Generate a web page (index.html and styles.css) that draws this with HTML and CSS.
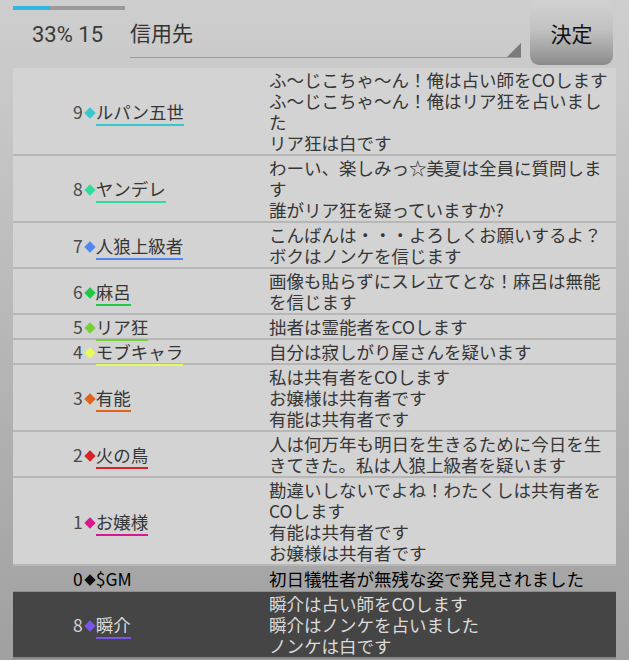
FILE: index.html
```html
<!DOCTYPE html>
<html lang="ja">
<head>
    <meta charset="UTF-8">
    <meta name="viewport" content="width=device-width, initial-scale=1.0">
    <title>投票</title>
    <link rel="stylesheet" href="styles.css">
</head>
<body>
    <header class="top">
        <div class="status">
            <div class="progress"><div class="progress-fill" style="width: 33%"></div></div>
            <div class="count">33% 15</div>
        </div>
        <div class="spinner">信用先</div>
        <button class="decide">決定</button>
    </header>

    <table class="log">
        <tbody>
            <tr>
                <td class="who"><span class="num">9</span><span class="dia c9"></span><span class="name c9">ルパン五世</span></td>
                <td class="msg">ふ〜じこちゃ〜ん！俺は占い師をCOします<br>ふ〜じこちゃ〜ん！俺はリア狂を占いました<br>リア狂は白です</td>
            </tr>
            <tr>
                <td class="who"><span class="num">8</span><span class="dia c8"></span><span class="name c8">ヤンデレ</span></td>
                <td class="msg">わーい、楽しみっ☆美夏は全員に質問します<br>誰がリア狂を疑っていますか?</td>
            </tr>
            <tr>
                <td class="who"><span class="num">7</span><span class="dia c7"></span><span class="name c7">人狼上級者</span></td>
                <td class="msg">こんばんは・・・よろしくお願いするよ？<br>ボクはノンケを信じます</td>
            </tr>
            <tr>
                <td class="who"><span class="num">6</span><span class="dia c6"></span><span class="name c6">麻呂</span></td>
                <td class="msg">画像も貼らずにスレ立てとな！麻呂は無能を信じます</td>
            </tr>
            <tr>
                <td class="who"><span class="num">5</span><span class="dia c5"></span><span class="name c5">リア狂</span></td>
                <td class="msg">拙者は霊能者をCOします</td>
            </tr>
            <tr>
                <td class="who"><span class="num">4</span><span class="dia c4"></span><span class="name c4">モブキャラ</span></td>
                <td class="msg">自分は寂しがり屋さんを疑います</td>
            </tr>
            <tr>
                <td class="who"><span class="num">3</span><span class="dia c3"></span><span class="name c3">有能</span></td>
                <td class="msg">私は共有者をCOします<br>お嬢様は共有者です<br>有能は共有者です</td>
            </tr>
            <tr>
                <td class="who"><span class="num">2</span><span class="dia c2"></span><span class="name c2">火の鳥</span></td>
                <td class="msg">人は何万年も明日を生きるために今日を生きてきた。私は人狼上級者を疑います</td>
            </tr>
            <tr>
                <td class="who"><span class="num">1</span><span class="dia c1"></span><span class="name c1">お嬢様</span></td>
                <td class="msg">勘違いしないでよね！わたくしは共有者をCOします<br>有能は共有者です<br>お嬢様は共有者です</td>
            </tr>
            <tr class="gm">
                <td class="who"><span class="num">0</span><span class="dia c0"></span>$GM</td>
                <td class="msg">初日犠牲者が無残な姿で発見されました</td>
            </tr>
            <tr class="dead">
                <td class="who"><span class="num">8</span><span class="dia cp"></span><span class="name cp">瞬介</span></td>
                <td class="msg">瞬介は占い師をCOします<br>瞬介はノンケを占いました<br>ノンケは白です</td>
            </tr>
        </tbody>
    </table>
</body>
</html>
```

FILE: styles.css
```css
html, body {
    height: 100%;
}

body {
    margin: 0;
    font-family: "Noto Sans CJK JP", "Noto Sans", sans-serif;
    color: #363636;
    background: linear-gradient(#cecece 0, #c9c9c9 80px, #a0a0a0 660px);
    overflow: hidden;
}

.top {
    display: flex;
    height: 68px;
    padding-left: 13px;
    box-sizing: border-box;
}

.status {
    width: 112px;
    margin-right: 5px;
}

.progress {
    height: 4px;
    margin-top: 6px;
    background-color: #9a9a9a;
}

.progress-fill {
    height: 100%;
    background-color: #33b5e5;
}

.count {
    margin-top: 12px;
    padding-left: 19px;
    font-family: Roboto, "Liberation Sans", sans-serif;
    font-size: 22px;
    line-height: 26px;
    color: #3a3a3a;
}

.spinner {
    position: relative;
    width: 391px;
    height: 58px;
    padding-top: 19px;
    box-sizing: border-box;
    border-bottom: 1px solid #9a9a9a;
    font-size: 21px;
    line-height: 26px;
    color: #333;
}

.spinner::after {
    content: "";
    position: absolute;
    right: 0;
    bottom: 0;
    border-style: solid;
    border-width: 0 0 14px 14px;
    border-color: transparent transparent #7a7a7a transparent;
}

.decide {
    width: 83px;
    height: 65px;
    margin-left: 9px;
    padding: 0;
    border: none;
    border-radius: 9px;
    background: linear-gradient(#d2d2d2 0, #c2c2c2 45%, #8c8c8c 100%);
    font-family: "Noto Sans CJK JP", sans-serif;
    font-size: 21px;
    color: #111;
}

.log {
    width: 603px;
    margin: 0 13px;
    border-collapse: collapse;
    font-size: 17.5px;
    line-height: 21px;
}

.log td {
    padding: 1px 0;
    background-color: #d3d3d3;
    border-bottom: 2px solid #b7b7b7;
}

.who {
    width: 195px;
    padding-left: 60px !important;
    vertical-align: middle;
    white-space: nowrap;
}

.msg {
    width: 347px;
    padding-left: 1px !important;
    vertical-align: top;
}

.num {
    color: #4a4a4a;
}

.dia {
    display: inline-block;
    width: 8px;
    height: 8px;
    margin: 0 2px 0 3px;
    vertical-align: 2px;
    transform: rotate(45deg);
}

.name {
    border-bottom: 2px solid;
}

.dia.c9 { background-color: #36c8cf; }
.dia.c8 { background-color: #2fdc9c; }
.dia.c7 { background-color: #4f86f0; }
.dia.c6 { background-color: #1ec944; }
.dia.c5 { background-color: #76d03a; }
.dia.c4 { background-color: #e6fb5c; }
.dia.c3 { background-color: #e0621a; }
.dia.c2 { background-color: #d42424; }
.dia.c1 { background-color: #d51a8e; }
.dia.c0 { background-color: #111; }
.dia.cp { background-color: #7a55e8; }

.name.c9 { border-color: #36c8cf; }
.name.c8 { border-color: #2fdc9c; }
.name.c7 { border-color: #4f86f0; }
.name.c6 { border-color: #1ec944; }
.name.c5 { border-color: #76d03a; }
.name.c4 { border-color: #e6fb5c; }
.name.c3 { border-color: #e0621a; }
.name.c2 { border-color: #d42424; }
.name.c1 { border-color: #d51a8e; }
.name.cp { border-color: #7a55e8; }

.log .gm td {
    padding: 2px 0;
    background-color: transparent;
    border-bottom: 1px solid #8e8e8e;
    color: #000;
}

.gm .num {
    color: #000;
}

.dead td {
    background-color: #454545;
    border-bottom: 2px solid #888;
    color: #dcdcdc;
}

.dead .num {
    color: #cfcfcf;
}
```
